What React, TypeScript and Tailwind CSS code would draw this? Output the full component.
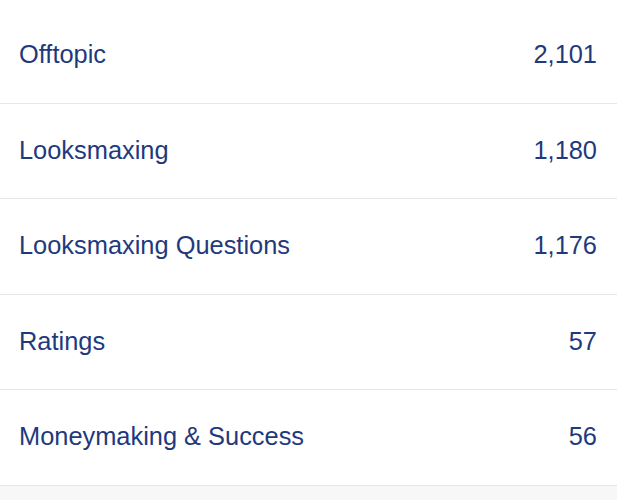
const forums = [
  { name: "Offtopic", count: "2,101" },
  { name: "Looksmaxing", count: "1,180" },
  { name: "Looksmaxing Questions", count: "1,176" },
  { name: "Ratings", count: "57" },
  { name: "Moneymaking & Success", count: "56" },
];

export default function App() {
  return (
    <div className="min-h-[500px] bg-[#f7f7f7] font-['Liberation_Sans',Arial,sans-serif]">
      <div className="bg-white pt-[8px]">
        {forums.map((f) => (
          <div
            key={f.name}
            className="flex h-[95.5px] items-center justify-between border-b border-[#e6e6e6] pb-[2px] pl-[19px] pr-[20px] text-[25.4px] text-[#1f3a7c]"
          >
            <span>{f.name}</span>
            <span>{f.count}</span>
          </div>
        ))}
      </div>
    </div>
  );
}
